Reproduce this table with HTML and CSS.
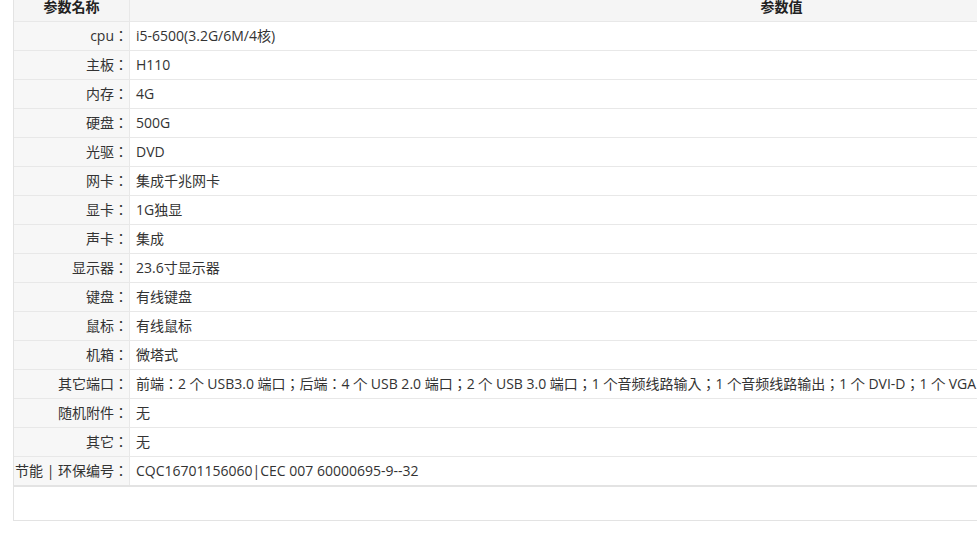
FILE: index.html
```html
<!DOCTYPE html>
<html lang="zh-CN">
<head>
<meta charset="utf-8">
<title>参数</title>
<link rel="stylesheet" href="styles.css">
</head>
<body>
<div class="box">
  <table class="spec">
    <thead>
      <tr><th class="k">参数名称</th><th class="v">参数值</th></tr>
    </thead>
    <tbody>
      <tr><td class="k">cpu：</td><td class="v">i5-6500(3.2G/6M/4核)</td></tr>
      <tr><td class="k">主板：</td><td class="v">H110</td></tr>
      <tr><td class="k">内存：</td><td class="v">4G</td></tr>
      <tr><td class="k">硬盘：</td><td class="v">500G</td></tr>
      <tr><td class="k">光驱：</td><td class="v">DVD</td></tr>
      <tr><td class="k">网卡：</td><td class="v">集成千兆网卡</td></tr>
      <tr><td class="k">显卡：</td><td class="v">1G独显</td></tr>
      <tr><td class="k">声卡：</td><td class="v">集成</td></tr>
      <tr><td class="k">显示器：</td><td class="v">23.6寸显示器</td></tr>
      <tr><td class="k">键盘：</td><td class="v">有线键盘</td></tr>
      <tr><td class="k">鼠标：</td><td class="v">有线鼠标</td></tr>
      <tr><td class="k">机箱：</td><td class="v">微塔式</td></tr>
      <tr><td class="k">其它端口：</td><td class="v">前端：2 个 USB3.0 端口；后端：4 个 USB 2.0 端口；2 个 USB 3.0 端口；1 个音频线路输入；1 个音频线路输出；1 个 DVI-D；1 个 VGA</td></tr>
      <tr><td class="k">随机附件：</td><td class="v">无</td></tr>
      <tr><td class="k">其它：</td><td class="v">无</td></tr>
      <tr class="last"><td class="k">节能 | 环保编号：</td><td class="v">CQC16701156060|CEC 007 60000695-9--32</td></tr>
    </tbody>
  </table>
</div>
</body>
</html>
```

FILE: styles.css
```css
html, body {
  margin: 0;
  padding: 0;
  overflow: hidden;
  background: #fff;
}
body {
  font-family: "Open Sans", "Noto Sans CJK JP", "Noto Sans CJK SC", sans-serif;
  font-size: 14px;
  color: #333;
  font-feature-settings: "locl" 0;
}
.box {
  margin: -7px 0 0 13px;
  width: 1419px;
  border: 1px solid #e3e3e3;
  border-top: none;
  padding-bottom: 33px;
}
.spec {
  width: 100%;
  border-collapse: collapse;
  table-layout: fixed;
  white-space: nowrap;
}
.spec th, .spec td {
  height: 28px;
  padding: 0;
  border-bottom: 1px solid #e8e8e8;
  line-height: 28px;
}
.spec th {
  background: #f5f5f5;
  font-weight: bold;
  text-align: center;
  color: #222;
}
.spec .k {
  width: 115px;
  border-right: 1px solid #e8e8e8;
  background: #f7f7f7;
  text-align: right;
  padding-right: 1px;
}
.spec th.k {
  text-align: center;
  padding-left: 0;
  padding-right: 0;
  background: #f5f5f5;
}
.spec td.v {
  padding-left: 6px;
  text-align: left;
}
.spec tr.last td {
  border-bottom: 2px solid #e3e3e3;
}
```
